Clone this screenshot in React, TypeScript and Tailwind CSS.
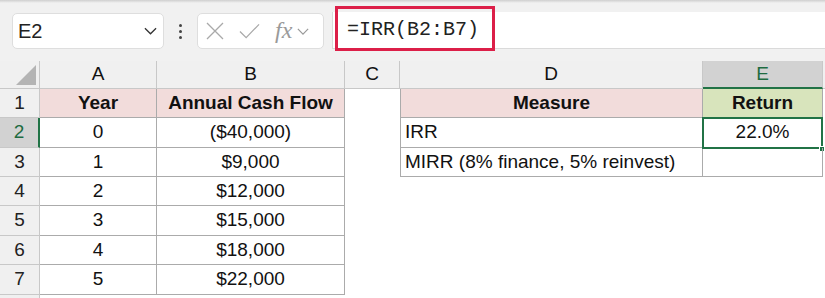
import type { ReactNode } from "react";

type Row = {
  n: number;
  a: string;
  b: string;
  d?: string;
  e?: string;
  table2: boolean;
};

const rows: Row[] = [
  { n: 2, a: "0", b: "($40,000)", d: "IRR", e: "22.0%", table2: true },
  { n: 3, a: "1", b: "$9,000", d: "MIRR (8% finance, 5% reinvest)", e: "", table2: true },
  { n: 4, a: "2", b: "$12,000", table2: false },
  { n: 5, a: "3", b: "$15,000", table2: false },
  { n: 6, a: "4", b: "$18,000", table2: false },
  { n: 7, a: "5", b: "$22,000", table2: false },
];

const heights = ["h-[30px]", "h-[29px]", "h-[29px]", "h-[30px]", "h-[29px]", "h-[30px]"];

const Chevron = ({ className }: { className?: string }) => (
  <svg viewBox="0 0 14 8" className={className} fill="none">
    <path d="M1 1l6 6 6-6" stroke="currentColor" strokeWidth="1.4" />
  </svg>
);

const RowHead = ({ children, active }: { children: ReactNode; active?: boolean }) => (
  <div
    className={
      active
        ? "w-[40px] shrink-0 flex items-center justify-center bg-[#d2d2d2] text-[#1e6b41] border-b border-[#c8c8c8] border-r-2 border-r-[#217346]"
        : "w-[40px] shrink-0 flex items-center justify-center bg-[#f0f0f0] text-[#222] border-b border-r border-[#c8c8c8]"
    }
  >
    {children}
  </div>
);

const Toolbar = () => (
  <div className="h-[61px] bg-[#f1f1f1] relative flex items-start pt-[13px]">
    <div className="absolute top-0 left-0 right-0 h-[3px] bg-gradient-to-b from-[#cfcfcf] to-[#f1f1f1]" />
    {/* name box */}
    <div className="ml-[12px] w-[152px] h-[36px] bg-white rounded-[5px] border border-[#dedede] flex items-center pl-[5px] pr-[6px]">
      <span className="text-[20px] text-[#222]">E2</span>
      <Chevron className="ml-auto w-[13px] h-[8px] text-[#333]" />
    </div>
    {/* dots */}
    <div className="w-[33px] h-[36px] flex flex-col items-center justify-center gap-[3px]">
      <span className="w-[3px] h-[3px] rounded-full bg-[#444]" />
      <span className="w-[3px] h-[3px] rounded-full bg-[#444]" />
      <span className="w-[3px] h-[3px] rounded-full bg-[#444]" />
    </div>
    {/* fx box */}
    <div className="w-[127px] h-[36px] bg-white rounded-[5px] border border-[#dedede] flex items-center pl-[8px] text-[#a9a9a9]">
      <svg viewBox="0 0 18 18" className="w-[18px] h-[18px]" fill="none">
        <path d="M1 1l16 16M17 1L1 17" stroke="currentColor" strokeWidth="1.3" />
      </svg>
      <svg viewBox="0 0 22 16" className="ml-[15px] w-[21px] h-[16px]" fill="none">
        <path d="M1 8.5l6.5 6.5L21 1" stroke="currentColor" strokeWidth="1.3" />
      </svg>
      <span className="ml-[15px] text-[24px] leading-none italic text-[#9a9a9a] font-['Liberation_Serif',serif] -mt-[3px]">
        fx
      </span>
      <Chevron className="ml-[5px] w-[12px] h-[7px] text-[#999]" />
    </div>
    {/* formula bar */}
    <div className="ml-[8px] flex-1 h-[37px] -mt-[1px] bg-white border-l border-b border-[#dadada] relative flex items-center">
      <div className="absolute left-[2px] top-[-6px] w-[160px] h-[45px] border-[3px] border-[#dc1f48]" />
      <span className="ml-[14px] text-[20px] text-[#222] font-['Liberation_Mono',monospace]">=IRR(B2:B7)</span>
    </div>
  </div>
);

const ColumnHeaders = () => (
  <div className="flex h-[28px] bg-[#f0f0f0] text-[19px] text-[#111]">
    <div className="w-[40px] shrink-0 border-r border-b border-[#c8c8c8] relative">
      <svg viewBox="0 0 20 20" className="absolute left-[16px] top-[4px] w-[20px] h-[20px]">
        <path d="M20 0V20H0Z" fill="#b4b4b4" />
      </svg>
    </div>
    <div className="w-[117px] shrink-0 border-r border-b border-[#c8c8c8] flex items-center justify-center">A</div>
    <div className="w-[188px] shrink-0 border-r border-b border-[#c8c8c8] flex items-center justify-center">B</div>
    <div className="w-[55px] shrink-0 border-r border-b border-[#c8c8c8] flex items-center justify-center">C</div>
    <div className="w-[303px] shrink-0 border-r border-b border-[#c8c8c8] flex items-center justify-center">D</div>
    <div className="w-[120px] shrink-0 bg-[#d2d2d2] text-[#1e6b41] border-r border-[#c8c8c8] border-b-2 border-b-[#217346] flex items-center justify-center">
      E
    </div>
    <div className="flex-1 border-b border-[#c8c8c8]" />
  </div>
);

export default function App() {
  return (
    <div className="w-[825px] h-[298px] overflow-hidden bg-white font-['Liberation_Sans',Arial,sans-serif]">
      <Toolbar />
      <ColumnHeaders />
      <div className="text-[19px] text-[#111]">
        {/* row 1: headings */}
        <div className="flex h-[29px]">
          <RowHead>1</RowHead>
          <div className="w-[117px] shrink-0 bg-[#f2dcdb] border-r border-b border-[#ababab] flex items-center justify-center font-bold">
            Year
          </div>
          <div className="w-[188px] shrink-0 bg-[#f2dcdb] border-r border-b border-[#ababab] flex items-center justify-center font-bold">
            Annual Cash Flow
          </div>
          <div className="w-[55px] shrink-0" />
          <div className="w-[303px] shrink-0 bg-[#f2dcdb] border-l border-r border-b border-[#ababab] flex items-center justify-center font-bold">
            Measure
          </div>
          <div className="w-[120px] shrink-0 bg-[#d8e4bc] border-r border-b border-[#ababab] flex items-center justify-center font-bold">
            Return
          </div>
        </div>

        {rows.map((r, i) => (
          <div key={r.n} className={`flex ${heights[i]}`}>
            <RowHead active={r.n === 2}>{r.n}</RowHead>
            <div className="w-[117px] shrink-0 border-r border-b border-[#ababab] flex items-center justify-center">
              {r.a}
            </div>
            <div className="w-[188px] shrink-0 border-r border-b border-[#ababab] flex items-center justify-center">
              {r.b}
            </div>
            <div className="w-[55px] shrink-0" />
            {r.table2 && (
              <>
                <div className="w-[303px] shrink-0 border-l border-r border-b border-[#ababab] flex items-center pl-[4px]">
                  {r.d}
                </div>
                <div className="w-[120px] shrink-0 border-r border-b border-[#ababab] flex items-center justify-center relative">
                  {r.e}
                  {r.n === 2 && (
                    <>
                      <div className="absolute -left-[1px] -top-[1px] -right-[1px] -bottom-[2px] border-2 border-[#217346]" />
                      <div className="absolute -right-[3px] -bottom-[5px] w-[6px] h-[6px] bg-[#217346] border border-white" />
                    </>
                  )}
                </div>
              </>
            )}
          </div>
        ))}
        <div className="flex h-[10px]">
          <div className="w-[40px] shrink-0 bg-[#f0f0f0] border-r border-[#c8c8c8]" />
        </div>
      </div>
    </div>
  );
}
